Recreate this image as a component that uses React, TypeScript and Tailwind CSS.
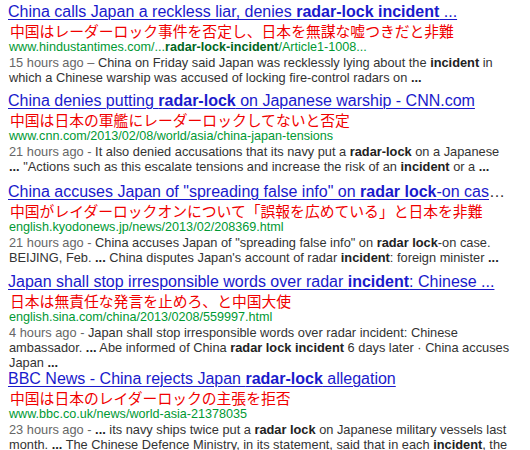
import React from "react";

const latin = { fontFamily: '"Liberation Sans", Arial, sans-serif' };

function B({ children }: { children: React.ReactNode }) {
  return <b className="font-bold text-[#222]">{children}</b>;
}
function TB({ children }: { children: React.ReactNode }) {
  return <b className="font-bold">{children}</b>;
}
function UB({ children }: { children: React.ReactNode }) {
  return <b className="font-bold text-[#006621]">{children}</b>;
}

type R = {
  title: React.ReactNode;
  jp: string;
  url: React.ReactNode;
  date: string;
  snippet: React.ReactNode;
  mt: string;
};

const results: R[] = [
  {
    mt: "mt-[3px]",
    title: (
      <>
        China calls Japan a reckless liar, denies <TB>radar-lock incident</TB> ...
      </>
    ),
    jp: "中国はレーダーロック事件を否定し、日本を無謀な嘘つきだと非難",
    url: (
      <>
        www.hindustantimes.com/...<UB>radar-lock-incident</UB>/Article1-1008...
      </>
    ),
    date: "15 hours ago – ",
    snippet: (
      <>
        China on Friday said Japan was recklessly lying about the <B>incident</B> in
        <br />
        which a Chinese warship was accused of locking fire-control radars on <B>...</B>
      </>
    ),
  },
  {
    mt: "mt-[7px]",
    title: (
      <>
        China denies putting <TB>radar-lock</TB> on Japanese warship - CNN.com
      </>
    ),
    jp: "中国は日本の軍艦にレーダーロックしてないと否定",
    url: <>www.cnn.com/2013/02/08/world/asia/china-japan-tensions</>,
    date: "21 hours ago - ",
    snippet: (
      <>
        It also denied accusations that its navy put a <B>radar-lock</B> on a Japanese
        <br />
        <B>...</B> "Actions such as this escalate tensions and increase the risk of an <B>incident</B> or a <B>...</B>
      </>
    ),
  },
  {
    mt: "mt-[9px]",
    title: (
      <>
        China accuses Japan of "spreading false info" on <TB>radar lock</TB>-on cas
      </>
    ),
    jp: "中国がレイダーロックオンについて「誤報を広めている」と日本を非難",
    url: <>english.kyodonews.jp/news/2013/02/208369.html</>,
    date: "21 hours ago - ",
    snippet: (
      <>
        China accuses Japan of "spreading false info" on <B>radar lock</B>-on case.
        <br />
        BEIJING, Feb. <B>...</B> China disputes Japan's account of radar <B>incident</B>: foreign minister <B>...</B>
      </>
    ),
  },
  {
    mt: "mt-[8px]",
    title: (
      <>
        Japan shall stop irresponsible words over radar <TB>incident</TB>: Chinese ...
      </>
    ),
    jp: "日本は無責任な発言を止めろ、と中国大使",
    url: <>english.sina.com/china/2013/0208/559997.html</>,
    date: "4 hours ago - ",
    snippet: (
      <>
        Japan shall stop irresponsible words over radar incident: Chinese
        <br />
        ambassador. <B>...</B> Abe informed of China <B>radar lock incident</B> 6 days later · China accuses
        <br />
        Japan <B>...</B>
      </>
    ),
  },
  {
    mt: "mt-0",
    title: (
      <>
        BBC News - China rejects Japan <TB>radar-lock</TB> allegation
      </>
    ),
    jp: "中国は日本のレイダーロックの主張を拒否",
    url: <>www.bbc.co.uk/news/world-asia-21378035</>,
    date: "23 hours ago - ",
    snippet: (
      <>
        <B>...</B> its navy ships twice put a <B>radar lock</B> on Japanese military vessels last
        <br />
        month. <B>...</B> The Chinese Defence Ministry, in its statement, said that in each <B>incident</B>, the
      </>
    ),
  },
];

export default function App() {
  return (
    <div className="w-[530px] h-[450px] overflow-hidden bg-white pl-[8px]" style={latin}>
      {results.map((r, i) => (
        <div key={i} className={r.mt}>
          <div className="text-[16px] leading-[18px] whitespace-nowrap text-[#1a1acc]">
            <span className="underline decoration-[1px] underline-offset-[2px]">{r.title}</span>
            {i === 2 && <span className="text-[#333]">…</span>}
          </div>
          <div
            className="mt-[1px] text-[14.8px] leading-[17px] whitespace-nowrap text-[#f00000] pl-[2px]"
            style={{ fontFamily: '"Noto Sans CJK JP", sans-serif' }}
          >
            {r.jp}
          </div>
          <div className="text-[12.6px] leading-[16px] whitespace-nowrap text-[#009933] pl-[1px]">{r.url}</div>
          <div className="text-[12.8px] leading-[15px] whitespace-nowrap text-[#333] pl-[1px]">
            <span className="text-[#666]">{r.date}</span>
            {r.snippet}
          </div>
        </div>
      ))}
    </div>
  );
}
